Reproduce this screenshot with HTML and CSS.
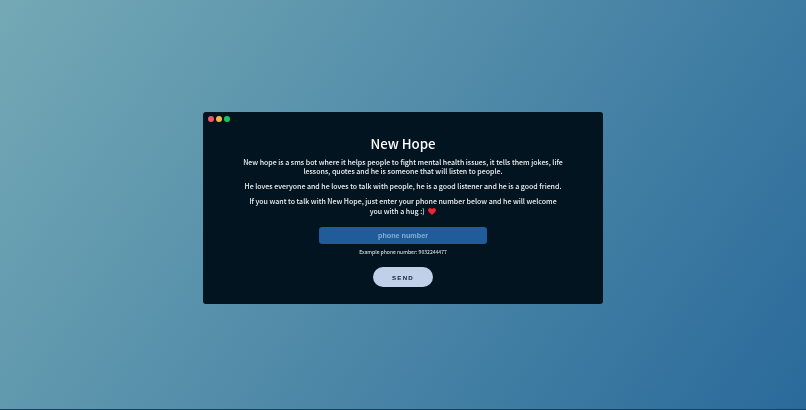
FILE: index.html
```html
<!DOCTYPE html>
<html lang="en">
<head>
<meta charset="utf-8">
<title>New Hope</title>
<link rel="stylesheet" href="styles.css">
</head>
<body>
<main class="stage">
  <section class="window">
    <div class="dots">
      <span class="dot red"></span>
      <span class="dot yellow"></span>
      <span class="dot green"></span>
    </div>
    <div class="content">
      <h1 class="title">New Hope</h1>
      <p class="text">New hope is a sms bot where it helps people to fight mental health issues, it tells them jokes, life lessons, quotes and he is someone that will listen to people.</p>
      <p class="text">He loves everyone and he loves to talk with people, he is a good listener and he is a good friend.</p>
      <p class="text">If you want to talk with New Hope, just enter your phone number below and he will welcome you with a hug :) <svg class="heart" viewBox="0 0 16 14" aria-hidden="true"><path d="M8 14 1.3 7.3C-.4 5.5-.4 2.9 1.2 1.3 2.8-.3 5.3-.3 6.9 1.2L8 2.3l1.1-1.1c1.6-1.5 4.1-1.5 5.7.1 1.6 1.6 1.6 4.2-.1 6z"/></svg></p>
      <input class="phone" type="text" placeholder="phone number">
      <p class="hint">Example phone number: 9032244477</p>
      <button class="send" type="button">SEND</button>
    </div>
  </section>
</main>
</body>
</html>
```
FILE: styles.css
```css
* { box-sizing: border-box; }
html, body { margin: 0; height: 100%; }
body {
  background: #16405f;
  font-family: "Noto Sans CJK KR", "Noto Sans", sans-serif;
  overflow: hidden;
}
.stage {
  height: 409px;
  display: flex;
  align-items: flex-start;
  justify-content: center;
  padding-top: 112px;
  background: linear-gradient(125deg, #74a9b5 0%, #2a6a9b 100%);
}
.window {
  width: 400px;
  height: 191.5px;
  background: #021420;
  border-radius: 3px;
  padding: 4px 5px;
}
.dots { display: flex; gap: 2px; }
.dot { width: 6px; height: 6px; border-radius: 50%; }
.red { background: #f0596a; }
.yellow { background: #f6b83f; }
.green { background: #13c85f; }
.content {
  display: flex;
  flex-direction: column;
  align-items: center;
  padding-top: 11px;
  will-change: transform;
}
.title {
  margin: 0 0 1px;
  font-size: 13.3px;
  line-height: 21px;
  font-weight: 500;
  color: #fff;
}
.text {
  width: 320.5px;
  margin: 2.75px 0;
  font-size: 7px;
  line-height: 9.5px;
  font-weight: 500;
  text-align: center;
  color: #f0f2f4;
}
.heart { width: 8px; height: 7px; fill: #ee2430; margin-left: 2px; vertical-align: -1px; }
.phone {
  width: 168px;
  height: 17px;
  margin-top: 8px;
  border: 0;
  border-radius: 3px;
  padding: 0;
  background: #1f5c99;
  text-align: center;
  font: 700 7.2px "Liberation Sans", sans-serif;
  color: #fff;
}
.phone::placeholder { color: #86aed6; opacity: 1; }
.hint {
  margin: 4px 0 0;
  font-size: 5.1px;
  line-height: 8px;
  color: #eef0f2;
}
.send {
  width: 60px;
  height: 20px;
  margin-top: 11px;
  border: 0;
  border-radius: 10px;
  background: #bfd0e8;
  color: #10233a;
  font: 700 6.2px "Liberation Sans", sans-serif;
  letter-spacing: 1.2px;
}
```
